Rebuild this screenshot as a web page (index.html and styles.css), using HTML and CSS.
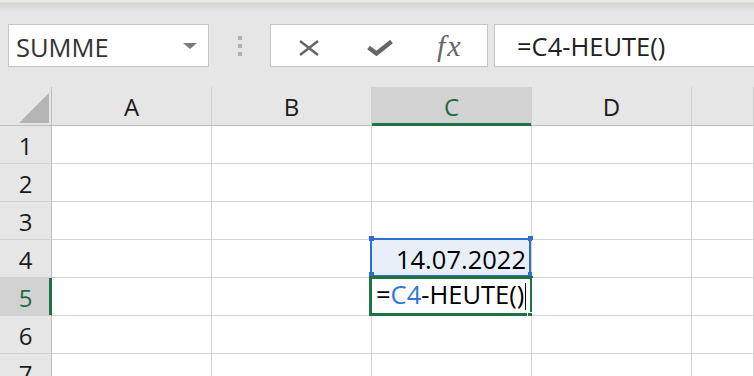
FILE: index.html
```html
<!DOCTYPE html>
<html lang="de">
<head>
  <meta charset="UTF-8">
  <title>Mappe1 - Excel</title>
  <link rel="stylesheet" href="styles.css">
</head>
<body>

<div class="ribbon-edge"></div>

<div class="formula-bar">
  <div class="name-box">
    <span class="name">SUMME</span>
    <span class="caret"></span>
  </div>
  <div class="grip"><i></i><i></i><i></i></div>
  <div class="actions">
    <svg class="icon-x" width="22" height="18" viewBox="0 0 22 18">
      <path d="M2 2 L20 16 M20 2 L2 16" stroke="#666" stroke-width="2.6" fill="none"/>
    </svg>
    <svg class="icon-check" width="26" height="16" viewBox="0 0 26 16">
      <path d="M1.5 7.5 L9.5 13.5 L24.5 1.5" stroke="#666" stroke-width="4.4" fill="none"/>
    </svg>
    <span class="fx">fx</span>
  </div>
  <div class="formula">=C4-HEUTE()</div>
</div>

<div class="sheet">
  <div class="corner"><span class="tri"></span></div>
  <div class="col-head">A</div>
  <div class="col-head">B</div>
  <div class="col-head active">C</div>
  <div class="col-head">D</div>
  <div class="col-head"></div>

  <div class="row-head">1</div>
  <div class="cell"></div><div class="cell"></div><div class="cell"></div><div class="cell"></div><div class="cell"></div>

  <div class="row-head">2</div>
  <div class="cell"></div><div class="cell"></div><div class="cell"></div><div class="cell"></div><div class="cell"></div>

  <div class="row-head">3</div>
  <div class="cell"></div><div class="cell"></div><div class="cell"></div><div class="cell"></div><div class="cell"></div>

  <div class="row-head">4</div>
  <div class="cell"></div><div class="cell"></div>
  <div class="cell ref">
    14.07.2022
    <div class="ref-box">
      <span class="h tl"></span><span class="h tr"></span><span class="h bl"></span><span class="h br"></span>
    </div>
  </div>
  <div class="cell"></div><div class="cell"></div>

  <div class="row-head active">5</div>
  <div class="cell"></div><div class="cell"></div>
  <div class="cell editing">
    <span>=<span class="ref-text">C4</span>-HEUTE()</span><span class="cursor"></span>
    <div class="sel-box"><span class="fill-handle"></span></div>
  </div>
  <div class="cell"></div><div class="cell"></div>

  <div class="row-head">6</div>
  <div class="cell"></div><div class="cell"></div><div class="cell"></div><div class="cell"></div><div class="cell"></div>

  <div class="row-head">7</div>
  <div class="cell"></div><div class="cell"></div><div class="cell"></div><div class="cell"></div><div class="cell"></div>
</div>

</body>
</html>
```

FILE: styles.css
```css
body { margin: 0; background: #e6e6e6; font-family: "Open Sans", "Noto Sans", sans-serif; color: #111; height: 376px; overflow: hidden; }

.ribbon-edge { height: 12px; background: linear-gradient(#ebe9e6 0, #ebe9e6 2px, #d2d2d2 3px, #e6e6e6 12px); }

/* formula bar */
.formula-bar { display: flex; height: 43px; margin-top: 12px; margin-right: -10px; }
.name-box { width: 201px; margin-left: 8px; box-sizing: border-box; border: 1px solid #c6c6c6; background: #fff; display: flex; align-items: center; justify-content: space-between; padding: 3px 11px 0 7px; }
.name { font-size: 25.5px; line-height: 38px; color: #333; }
.caret { width: 0; height: 0; border-left: 7px solid transparent; border-right: 7px solid transparent; border-top: 6px solid #7b7b7b; margin-top: -3px; }
.grip { width: 61px; display: flex; flex-direction: column; align-items: center; gap: 4px; padding-top: 12px; box-sizing: border-box; }
.grip i { display: block; width: 4px; height: 4px; background: #b1b1b1; }
.actions { width: 218px; box-sizing: border-box; border: 1px solid #c6c6c6; background: #fff; display: flex; align-items: center; padding-left: 27px; }
.icon-x { margin-top: 4px; }
.icon-check { margin-left: 47px; margin-top: 5px; }
.fx { margin-left: 44px; font-family: "Liberation Serif", serif; font-style: italic; font-size: 30px; letter-spacing: 2px; color: #666; margin-top: 1px; }
.formula { flex: 1; margin-left: 6px; box-sizing: border-box; border: 1px solid #c6c6c6; background: #fff; font-size: 25.5px; line-height: 38px; padding: 2px 0 0 22px; color: #222; }

/* grid */
.sheet { display: grid; grid-template-columns: 52px repeat(4, 160px) 1fr; grid-template-rows: 39px; grid-auto-rows: 38px; margin-top: 20px; }
.sheet > div { box-sizing: border-box; }
.corner { border-right: 1px solid #bdbdbd; border-bottom: 1px solid #bdbdbd; display: flex; align-items: flex-end; justify-content: flex-end; padding: 0 2px 2px 0; }
.tri { width: 0; height: 0; border-left: 30px solid transparent; border-bottom: 30px solid #b4b4b4; }
.col-head { border-right: 1px solid #d0d0d0; border-bottom: 1px solid #bdbdbd; text-align: center; font-size: 24px; line-height: 40px; color: #1a1a1a; }
.col-head.active { background: #d2d2d2; color: #1d6b40; border-bottom-color: #1f7244; box-shadow: inset 0 -2px 0 #1f7244; }
.row-head { border-right: 1px solid #bdbdbd; border-bottom: 1px solid #d0d0d0; text-align: center; font-size: 24px; line-height: 39px; color: #1a1a1a; }
.row-head.active { background: #d2d2d2; color: #1d6b40; border-right-color: #1f7244; box-shadow: inset -2px 0 0 #1f7244; }
.cell { border-right: 1px solid #d4d4d4; border-bottom: 1px solid #d4d4d4; background: #fff; font-size: 25.5px; line-height: 38px; position: relative; white-space: nowrap; }

.ref { background: #e8eff9; text-align: right; padding-right: 5px; color: #000; }
.ref-box { position: absolute; left: -2px; top: -2px; right: 0; bottom: 0; border: 2px solid #2b6fd1; }
.h { position: absolute; width: 5px; height: 5px; background: #2b6fd1; }
.h.tl { left: -3px; top: -4px; }
.h.tr { right: -4px; top: -4px; }
.h.bl { left: -3px; bottom: -2px; }
.h.br { right: -4px; bottom: -2px; }

.editing { padding-left: 4px; line-height: 32px; color: #000; }
.ref-text { color: #2e78d8; }
.cursor { display: inline-block; width: 1px; height: 27px; background: #000; vertical-align: -6px; margin-left: 1px; }
.sel-box { position: absolute; left: -3px; top: -2px; right: -2px; bottom: -1px; border: 3px solid #1f7244; }
.fill-handle { position: absolute; right: -5px; bottom: -6px; width: 7px; height: 6px; background: #1f7244; border-left: 1px solid #fff; border-top: 1px solid #fff; }
```
